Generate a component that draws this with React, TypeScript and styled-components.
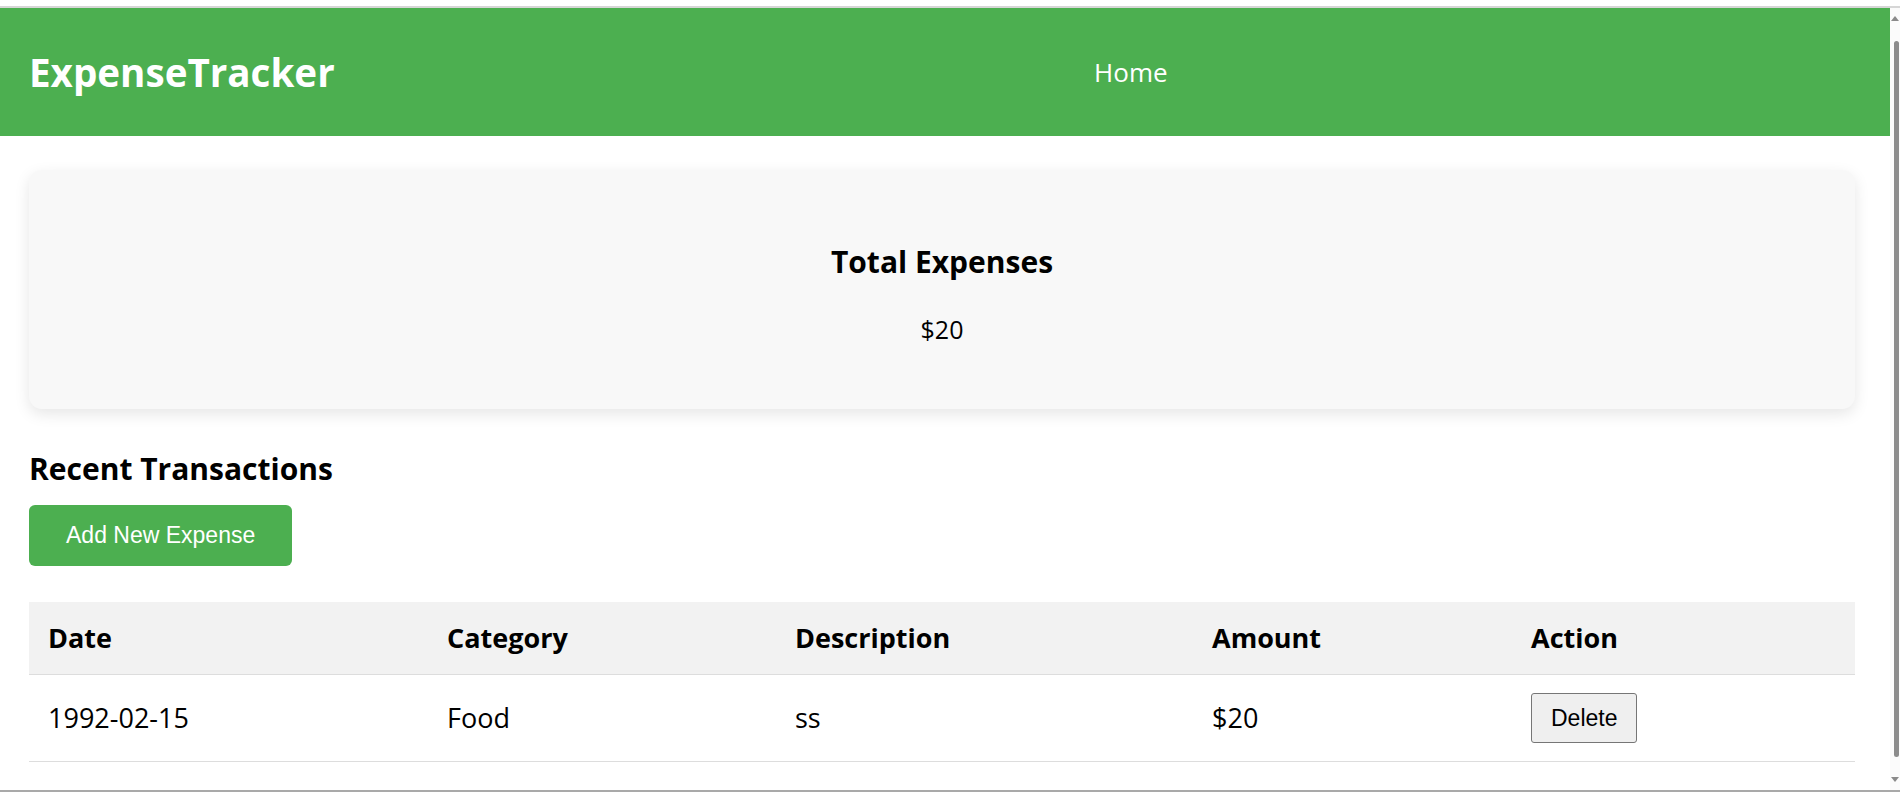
import React from "react";
import styled, { createGlobalStyle } from "styled-components";

const GlobalStyle = createGlobalStyle`
  html, body {
    margin: 0;
    padding: 0;
    background: #ffffff;
  }
  body {
    padding-top: 6px;
    font-family: "Open Sans", "Noto Sans", sans-serif;
    color: #000;
  }
`;

const Page = styled.div`
  border-top: 2px solid #d6d6d6;
`;

const Viewport = styled.div`
  margin-right: 10px;
`;

const Header = styled.header`
  height: 128px;
  box-sizing: border-box;
  background: #4caf50;
  display: flex;
  align-items: center;
  padding: 0 25px 0 29px;
`;

const Logo = styled.h1`
  margin: 0;
  font-size: 38.6px;
  line-height: 48px;
  font-weight: 700;
  color: #ffffff;
`;

const Nav = styled.nav`
  flex: 1;
  display: flex;
  justify-content: center;
  padding-left: 62px;
`;

const NavLink = styled.a`
  color: #ffffff;
  font-size: 26px;
  line-height: 32px;
  text-decoration: none;
`;

const Main = styled.main`
  padding: 34px 35px 110px 29px;
`;

const SummaryCard = styled.section`
  background: #f8f8f8;
  border-radius: 13px;
  box-shadow: 0 5px 15px rgba(0, 0, 0, 0.1);
  padding: 72px 20px 65px;
  text-align: center;
`;

const CardTitle = styled.h2`
  margin: 0 0 32px;
  font-size: 30px;
  line-height: 40px;
  font-weight: 700;
`;

const CardValue = styled.p`
  margin: 0;
  font-size: 25px;
  line-height: 30px;
`;

const SectionTitle = styled.h2`
  margin: 40px 0 0;
  font-size: 30px;
  line-height: 40px;
  font-weight: 700;
`;

const PrimaryButton = styled.button`
  margin-top: 16px;
  display: block;
  height: 61px;
  padding: 0 37px;
  border: none;
  border-radius: 6px;
  background: #4caf50;
  color: #ffffff;
  font-family: "Liberation Sans", Arial, sans-serif;
  font-size: 23px;
  cursor: pointer;
`;

const Table = styled.table`
  margin-top: 36px;
  width: 100%;
  table-layout: fixed;
  border-collapse: collapse;
  font-size: 27px;
`;

const Col = styled.col<{ $w: number }>`
  width: ${(p) => p.$w}px;
`;

const HeadCell = styled.th`
  background: #f2f2f2;
  text-align: left;
  font-weight: 700;
  padding: 18px 19px;
  line-height: 36px;
  border-bottom: 1px solid #dddddd;
`;

const Cell = styled.td`
  text-align: left;
  padding: 18px 19px;
  line-height: 36px;
  border-bottom: 1px solid #dddddd;
  vertical-align: middle;
`;

const DeleteButton = styled.button`
  display: block;
  height: 50px;
  padding: 0 19px;
  background: #efefef;
  border: 1px solid #767676;
  border-radius: 3px;
  color: #000;
  font-family: "Liberation Sans", Arial, sans-serif;
  font-size: 23px;
  cursor: pointer;
`;

const FrameEdge = styled.div`
  position: fixed;
  left: 0;
  right: 0;
  bottom: 1px;
  height: 2px;
  background: #a9a9a9;
  pointer-events: none;
`;

const ScrollTrack = styled.div`
  position: fixed;
  top: 8px;
  right: 0;
  bottom: 3px;
  width: 10px;
  background: #fbfbfb;
  display: flex;
  flex-direction: column;
  align-items: flex-end;
  padding: 8px 0;
  box-sizing: border-box;
  gap: 20px;
`;

const ScrollArrow = styled.div<{ $down?: boolean }>`
  width: 0;
  height: 0;
  margin-right: 1px;
  border-left: 4px solid transparent;
  border-right: 4px solid transparent;
  ${(p) =>
    p.$down
      ? "border-top: 5px solid #8a8a8a;"
      : "border-bottom: 5px solid #8a8a8a;"}
`;

const ScrollThumb = styled.div`
  flex: 1;
  width: 5px;
  margin-right: 1px;
  background: #8c8c8c;
  border-radius: 3px;
`;

type Expense = {
  date: string;
  category: string;
  description: string;
  amount: number;
};

const expenses: Expense[] = [
  { date: "1992-02-15", category: "Food", description: "ss", amount: 20 },
];

const columns = [
  { label: "Date", w: 399 },
  { label: "Category", w: 348 },
  { label: "Description", w: 417 },
  { label: "Amount", w: 319 },
  { label: "Action", w: 343 },
];

export default function App() {
  const total = expenses.reduce((s, e) => s + e.amount, 0);
  return (
    <Page>
      <GlobalStyle />
      <Viewport>
        <Header>
          <Logo>ExpenseTracker</Logo>
          <Nav>
            <NavLink href="#">Home</NavLink>
          </Nav>
        </Header>
        <Main>
          <SummaryCard>
            <CardTitle>Total Expenses</CardTitle>
            <CardValue>${total}</CardValue>
          </SummaryCard>
          <SectionTitle>Recent Transactions</SectionTitle>
          <PrimaryButton>Add New Expense</PrimaryButton>
          <Table>
            <colgroup>
              {columns.map((c) => (
                <Col key={c.label} $w={c.w} />
              ))}
            </colgroup>
            <thead>
              <tr>
                {columns.map((c) => (
                  <HeadCell key={c.label}>{c.label}</HeadCell>
                ))}
              </tr>
            </thead>
            <tbody>
              {expenses.map((e, i) => (
                <tr key={i}>
                  <Cell>{e.date}</Cell>
                  <Cell>{e.category}</Cell>
                  <Cell>{e.description}</Cell>
                  <Cell>${e.amount}</Cell>
                  <Cell>
                    <DeleteButton>Delete</DeleteButton>
                  </Cell>
                </tr>
              ))}
            </tbody>
          </Table>
        </Main>
      </Viewport>
      <ScrollTrack>
        <ScrollArrow />
        <ScrollThumb />
        <ScrollArrow $down />
      </ScrollTrack>
      <FrameEdge />
    </Page>
  );
}
